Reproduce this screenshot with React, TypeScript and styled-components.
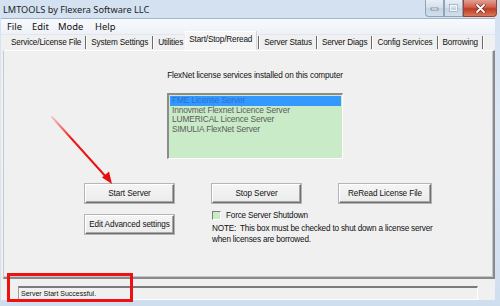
import React from 'react'
import styled, { createGlobalStyle } from 'styled-components'

const GlobalStyle = createGlobalStyle`
  html, body {
    margin: 0;
    padding: 0;
    background: #dbe6f3;
  }
  body {
    font-family: "Liberation Sans", Arial, sans-serif;
  }
`

const Window = styled.div`
  position: relative;
  width: 500px;
  height: 306px;
  overflow: hidden;
  background: linear-gradient(180deg, #d3e1f1 0%, #dce7f4 40%, #cfdeef 100%);
  display: flex;
  flex-direction: column;
`

const TitleBar = styled.div`
  height: 18px;
  display: flex;
  align-items: center;
  justify-content: space-between;
  padding-left: 3px;
`

const Title = styled.div`
  font-family: "Noto Sans", "Liberation Sans", sans-serif;
  font-size: 9.2px;
  color: #1e1e1e;
  padding-top: 1px;
`

const Caption = styled.div`
  display: flex;
  align-self: flex-start;
  margin-right: 3px;
`

const CapButton = styled.div<{ $close?: boolean }>`
  width: ${p => (p.$close ? '34px' : '19px')};
  height: 17px;
  border: 1px solid ${p => (p.$close ? '#9a4334' : '#8fa3bb')};
  border-top: none;
  border-radius: ${p => (p.$close ? '0 0 4px 0' : '0')};
  background: ${p =>
    p.$close
      ? 'linear-gradient(180deg, #e0a093 0%, #d0604c 45%, #c13a22 55%, #d47a5c 100%)'
      : 'linear-gradient(180deg, #e8eef6 0%, #d3dfec 50%, #c4d3e4 52%, #d2deeb 100%)'};
  display: flex;
  align-items: center;
  justify-content: center;
  box-sizing: border-box;
  &:first-child {
    border-radius: 0 0 0 4px;
  }
`

const Client = styled.div`
  flex: 1;
  margin: 0 5px 6px 1px;
  background: #f0f0f0;
  border-top: 1px solid #a3b5cb;
  display: flex;
  flex-direction: column;
`

const MenuBar = styled.div`
  height: 15px;
  display: flex;
  align-items: center;
  padding-left: 6px;
  background: linear-gradient(180deg, #f7f9fc 0%, #eef2f8 100%);
  border-bottom: 1px solid #e1e6ee;
`

const MenuItem = styled.span<{ $w: number }>`
  width: ${p => p.$w}px;
  font-family: "Noto Sans", "Liberation Sans", sans-serif;
  font-size: 9.4px;
  color: #111;
`

const TabStrip = styled.div`
  height: 15px;
  display: flex;
  align-items: flex-end;
  padding-left: 8px;
`

const Tab = styled.div<{ $active?: boolean }>`
  height: ${p => (p.$active ? '16px' : '13px')};
  display: flex;
  align-items: center;
  padding: 0 ${p => (p.$active ? '4px' : '2px')};
  margin-bottom: ${p => (p.$active ? '0' : '1px')};
  padding-bottom: ${p => (p.$active ? '3px' : '0')};
  font-size: 8.2px;
  letter-spacing: -0.15px;
  color: #111;
  white-space: nowrap;
  background: ${p => (p.$active ? '#f5f5f5' : 'transparent')};
  box-shadow: ${p => (p.$active ? 'inset 1px 1px 0 #ffffff, 1px 0 0 #d6d6d6' : 'none')};
`

const TabSep = styled.span`
  width: 1px;
  height: 13px;
  margin: 0 2px 1px 2px;
  background: #6a6a6a;
  border-right: 1px solid #ffffff;
`

const Panel = styled.div`
  height: 226px;
  margin: 0 0 0 2px;
  border-left: 1px solid #c9c9c9;
  border-top: 1px solid #ffffff;
  border-right: 2px solid #8a8a8a;
  border-bottom: 2px solid #8a8a8a;
  box-shadow: inset -1px -1px 0 #c6c6c6;
  display: flex;
  flex-direction: column;
  align-items: center;
`

const Heading = styled.div`
  margin: 20px 0 0 13px;
  font-size: 8.2px;
  letter-spacing: -0.15px;
  color: #111;
`

const ListBox = styled.div`
  margin: 13px 0 0 13px;
  width: 176px;
  height: 66px;
  box-sizing: border-box;
  background: #c9ebc8;
  border-top: 2px solid #8c8c8c;
  border-left: 2px solid #8c8c8c;
  border-right: 1px solid #ffffff;
  border-bottom: 1px solid #ffffff;
  padding: 1px;
`

const ListRow = styled.div<{ $selected?: boolean }>`
  height: 9.5px;
  line-height: 9.5px;
  font-size: 8.4px;
  padding-left: 2px;
  color: ${p => (p.$selected ? '#2e6fd0' : '#5c5c5c')};
  background: ${p => (p.$selected ? '#3399ff' : 'transparent')};
  white-space: nowrap;
  letter-spacing: -0.15px;
`

const Controls = styled.div`
  align-self: stretch;
  margin-top: 25px;
  padding-left: 81px;
  display: grid;
  grid-template-columns: 89px 89px 92px;
  column-gap: 38px;
`

const Button = styled.button<{ $top?: number }>`
  height: 19px;
  margin-top: ${p => p.$top ?? 0}px;
  padding: 0;
  font-family: "Liberation Sans", Arial, sans-serif;
  font-size: 8.2px;
  letter-spacing: -0.1px;
  color: #111;
  background: linear-gradient(180deg, #f4f4f4 0%, #ececec 100%);
  border: 1px solid;
  border-color: #ffffff #6e6e6e #6e6e6e #ffffff;
  box-shadow: inset -1px -1px 0 #a8a8a8, 0 0 0 1px #b5b5b5;
  white-space: nowrap;
  cursor: default;
`

const NoteCell = styled.div`
  grid-column: 2 / 4;
  padding-top: 7px;
  font-size: 8.2px;
  letter-spacing: -0.2px;
  color: #111;
`

const CheckRow = styled.div`
  display: flex;
  align-items: center;
  gap: 5px;
  height: 10px;
`

const CheckBox = styled.span`
  width: 7px;
  height: 7px;
  background: #c9ebc8;
  border-top: 1px solid #7d7d7d;
  border-left: 1px solid #7d7d7d;
  border-right: 1px solid #ffffff;
  border-bottom: 1px solid #ffffff;
`

const Note = styled.div`
  margin-top: 4px;
  line-height: 10.5px;
  white-space: nowrap;
`

const StatusArea = styled.div`
  flex: 1;
  display: flex;
  align-items: flex-start;
  padding: 7px 17px 0 17px;
`

const StatusBox = styled.div`
  flex: 1;
  height: 14px;
  box-sizing: border-box;
  border-top: 2px solid #7a7a7a;
  border-left: 1px solid #a0a0a0;
  border-right: 1px solid #ffffff;
  border-bottom: 1px solid #ffffff;
  font-size: 7px;
  color: #111;
  line-height: 11px;
  padding-left: 2px;
`

const Highlight = styled.div`
  position: absolute;
  left: 7px;
  top: 273px;
  width: 126px;
  height: 29px;
  box-sizing: border-box;
  border: 3px solid #ee1111;
`

const Arrow = styled.svg`
  position: absolute;
  left: 0;
  top: 0;
  pointer-events: none;
`

const tabs = [
  'Service/License File',
  'System Settings',
  'Utilities',
  'Start/Stop/Reread',
  'Server Status',
  'Server Diags',
  'Config Services',
  'Borrowing',
]

const servers = [
  'FME License Server',
  'Innovmet Flexnet Licence Server',
  'LUMERICAL Licence Server',
  'SIMULIA FlexNet Server',
]

export default function App() {
  return (
    <>
      <GlobalStyle />
      <Window>
        <TitleBar>
          <Title>LMTOOLS by Flexera Software LLC</Title>
          <Caption>
            <CapButton>
              <svg width="9" height="6" viewBox="0 0 9 6">
                <rect x="1" y="3" width="7" height="2" fill="#fff" stroke="#4a5f7a" strokeWidth="0.6" />
              </svg>
            </CapButton>
            <CapButton>
              <svg width="9" height="8" viewBox="0 0 9 8">
                <rect x="1" y="1" width="7" height="6" fill="none" stroke="#fff" strokeWidth="1.4" />
                <rect x="0.5" y="0.5" width="8" height="7" fill="none" stroke="#6b7f98" strokeWidth="0.5" />
              </svg>
            </CapButton>
            <CapButton $close>
              <svg width="11" height="9" viewBox="0 0 11 9">
                <path d="M2 1 L9 8 M9 1 L2 8" stroke="#5b1a10" strokeWidth="3" strokeLinecap="round" />
                <path d="M2 1 L9 8 M9 1 L2 8" stroke="#fff" strokeWidth="1.8" strokeLinecap="round" />
              </svg>
            </CapButton>
          </Caption>
        </TitleBar>
        <Client>
          <MenuBar>
            <MenuItem $w={25}>File</MenuItem>
            <MenuItem $w={26}>Edit</MenuItem>
            <MenuItem $w={37}>Mode</MenuItem>
            <MenuItem $w={30}>Help</MenuItem>
          </MenuBar>
          <TabStrip>
            {tabs.map((t, i) => (
              <React.Fragment key={t}>
                <Tab $active={i === 3}>{t}</Tab>
                {i !== 2 && <TabSep />}
              </React.Fragment>
            ))}
          </TabStrip>
          <Panel>
            <Heading>FlexNet license services installed on this computer</Heading>
            <ListBox>
              {servers.map((s, i) => (
                <ListRow key={s} $selected={i === 0}>
                  {s}
                </ListRow>
              ))}
            </ListBox>
            <Controls>
              <Button>Start Server</Button>
              <Button>Stop Server</Button>
              <Button>ReRead License File</Button>
              <Button $top={12}>Edit Advanced settings</Button>
              <NoteCell>
                <CheckRow>
                  <CheckBox />
                  <span>Force Server Shutdown</span>
                </CheckRow>
                <Note>
                  NOTE:&nbsp; This box must be checked to shut down a license server
                  <br />
                  when licenses are borrowed.
                </Note>
              </NoteCell>
            </Controls>
          </Panel>
          <StatusArea>
            <StatusBox>Server Start Successful.</StatusBox>
          </StatusArea>
        </Client>
        <Highlight />
        <Arrow width="500" height="306" viewBox="0 0 500 306">
          <defs>
            <linearGradient id="shaft" x1="52" y1="117" x2="108" y2="178" gradientUnits="userSpaceOnUse">
              <stop offset="0" stopColor="#ff2020" stopOpacity="0.2" />
              <stop offset="0.35" stopColor="#f01818" />
              <stop offset="1" stopColor="#e60f0f" />
            </linearGradient>
          </defs>
          <path d="M52 117 L107 178" stroke="url(#shaft)" strokeWidth="2" strokeLinecap="round" />
          <path d="M112 184 L102 177.5 L109 171.5 Z" fill="#e60f0f" />
        </Arrow>
      </Window>
    </>
  )
}
